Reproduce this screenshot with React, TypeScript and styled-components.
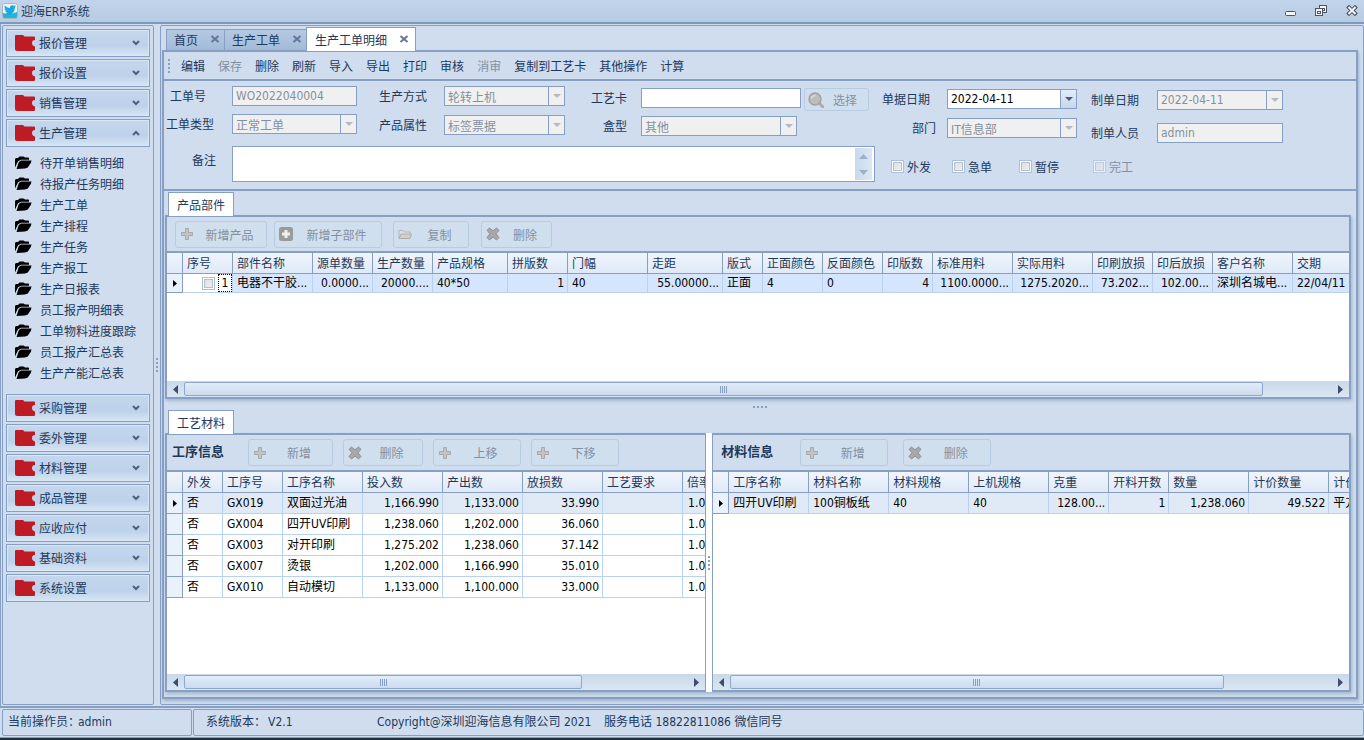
import React from "react";
import styled, { createGlobalStyle, css } from "styled-components";
import { FaTwitter } from "react-icons/fa";

const line = "#869fc3";
const lightLine = "#b9d1f3";
const surface = "#cfddee";
const ink = "#1e395b";
const muted = "#84909f";

const GlobalStyle = createGlobalStyle`
  *, *::before, *::after { box-sizing: border-box; }
  body {
    margin: 0;
    background: ${surface};
    color: ${ink};
    font: 12px/18px "DejaVu Sans Condensed", "Noto Sans CJK SC", sans-serif;
  }
  button, input, select, textarea { font: inherit; color: inherit; margin: 0; border-radius: 0; }
  button { padding: 0; border: 0; background: none; }
  svg { display: block; flex: none; }
`;

/* ---------- window frame ---------- */

const Window = styled.div`
  min-height: 100vh;
  display: flex;
  flex-direction: column;
  background: ${surface};
  border-bottom: 2px solid #1f323f;
`;

const TitleBar = styled.header`
  height: 24px;
  display: flex;
  align-items: center;
  gap: 3px;
  padding: 0 5px 0 2px;
  background: linear-gradient(#c2d4ec, #b8cbe3);
  border-bottom: 2px solid #7c9abc;
`;

const AppTitle = styled.h1`
  margin: 0;
  padding-top: 2px;
  flex: 1;
  font-size: 12px;
  font-weight: normal;
`;

const WindowButtons = styled.div`
  display: flex;
  gap: 18px;
`;

const Workspace = styled.div`
  flex: 1;
  display: flex;
  padding: 1px 0 1px 1px;
  border-left: 1px solid ${line};
`;

const Sidebar = styled.nav`
  flex: none;
  width: 152px;
  display: flex;
  flex-direction: column;
  gap: 2px;
  padding: 3px;
  border: 1px solid ${line};
  border-radius: 2px;
`;

const NavButton = styled.button`
  height: 28px;
  flex: none;
  display: flex;
  align-items: center;
  gap: 4px;
  padding: 0 8px;
  border: 1px solid ${line};
  background: linear-gradient(#c4d7ec, #bdd1ea 60%, #d6e6f4);
  box-shadow: inset 0 0 0 1px #d9e7f5;
  text-align: left;

  span { flex: 1; padding-top: 2px; }
`;

const NavList = styled.ul`
  list-style: none;
  margin: 0;
  padding: 3px 9px 9px;
`;

const NavLink = styled.a`
  height: 21px;
  display: flex;
  align-items: center;
  gap: 8px;
  color: ${ink};
  text-decoration: none;
  white-space: nowrap;

  span { padding-top: 2px; }
`;

const Grip = styled.div<{ $vertical?: boolean; $white?: boolean }>`
  flex: none;
  display: flex;
  align-items: center;
  justify-content: center;
  gap: 2px;
  ${p => (p.$vertical ? "width: 6px; flex-direction: column;" : "height: 11px; padding-top: 5px;")}
  background: ${p => (p.$white ? "#fff" : "transparent")};

  i { width: 2px; height: 2px; background: ${line}; }
`;

const Main = styled.main`
  flex: 1;
  min-width: 0;
  display: flex;
  flex-direction: column;
  padding: 1px 5px 5px 1px;
  border: 1px solid ${line};
  border-radius: 2px;
`;

/* ---------- tabs ---------- */

const PageTabs = styled.div`
  height: 23px;
  flex: none;
  display: flex;
  align-items: flex-end;
  padding-left: 4px;
`;

const PageTab = styled.div<{ $active?: boolean }>`
  height: 21px;
  display: flex;
  align-items: center;
  gap: 12px;
  padding: 0 4px 0 7px;
  border: 1px solid ${line};
  border-right-width: 0;
  border-bottom: 0;
  background: linear-gradient(#b4c9e2, #a3bbd9);

  span { padding-top: 2px; }
  ${p => p.$active && css`
    position: relative;
    height: 24px;
    margin-bottom: -1px;
    padding: 0 6px 0 8px;
    border-right-width: 1px;
    background: #fff;
  `}
`;

const Page = styled.section`
  flex: 1;
  display: flex;
  flex-direction: column;
  border: 2px solid ${line};
  box-shadow: 1px 2px 3px rgba(90, 115, 150, 0.4);
`;

const SectionTabs = styled.div`
  flex: none;
  height: 23px;
  display: flex;
  padding-left: 3px;
`;

const SectionTab = styled.button`
  position: relative;
  height: 24px;
  padding: 2px 8px 0;
  border: 1px solid ${line};
  border-bottom: 0;
  background: #fff;
`;

/* ---------- toolbar ---------- */

const Toolbar = styled.div`
  flex: none;
  height: 29px;
  display: flex;
  align-items: center;
  gap: 9px;
  padding-left: 2px;
  border-bottom: 2px solid ${line};
`;

const ToolButtons = styled.div`
  display: flex;
  gap: 13px;
  padding-top: 2px;
`;

const ToolButton = styled.button`
  white-space: nowrap;
  &:disabled { color: ${muted}; }
`;

/* ---------- form ---------- */

const Form = styled.form`
  flex: none;
  display: flex;
  gap: 7px;
  padding: 5px 2px 7px;
  border-bottom: 2px solid ${line};
`;

const FormBlock = styled.div`
  flex: none;
  display: flex;
  flex-direction: column;
`;

const FieldRow = styled.div<{ $end?: number }>`
  display: flex;
  align-items: flex-start;
  padding-right: ${p => p.$end ?? 0}px;
`;

const FieldStack = styled.div<{ $label: number; $control: number; $gap?: number; $top?: number; $before?: number }>`
  display: grid;
  grid-template-columns: ${p => p.$label}px ${p => p.$control}px;
  row-gap: ${p => p.$gap ?? 8}px;
  align-items: center;
  padding-top: ${p => p.$top ?? 0}px;
  margin-left: ${p => p.$before ?? 0}px;
`;

const Label = styled.label<{ $end?: number; $inset?: number }>`
  white-space: nowrap;
  padding-top: 2px;
  padding-left: ${p => p.$inset ?? 0}px;
  ${p => p.$end !== undefined && `text-align: right; padding-right: ${p.$end}px;`}
`;

const TextInput = styled.input`
  width: 100%;
  height: 20px;
  padding: 0 3px;
  border: 1px solid ${line};
  background: #fff;
  &:disabled { background: #f0f0f0; color: ${muted}; }
`;

const PickerBox = styled.div<{ $short?: boolean; $live?: boolean }>`
  width: ${p => (p.$short ? "calc(100% - 4px)" : "100%")};
  height: 20px;
  display: flex;
  border: 1px solid ${line};
  background: ${p => (p.$live ? "#fff" : "#f0f0f0")};
  color: ${p => (p.$live ? "#000" : muted)};

  select, input {
    flex: 1;
    min-width: 0;
    appearance: none;
    border: 0;
    padding: 0 3px;
    background: none;
    color: inherit;
    opacity: 1;
  }
  select { padding-top: 2px; }
`;

const PickerArrow = styled.button<{ $live?: boolean }>`
  width: 16px;
  display: flex;
  align-items: center;
  justify-content: center;
  border-left: 1px solid ${line};
  background: ${p => (p.$live ? "linear-gradient(#e3edf8, #c6d8ed)" : "none")};
`;

const RemarkRow = styled.div`
  display: grid;
  grid-template-columns: 66px 1fr;
  align-items: center;
  margin-top: 10px;

  label { padding-bottom: 8px; }
`;

const RemarkBox = styled.div`
  height: 36px;
  display: flex;
  padding: 1px 2px 1px 0;
  border: 1px solid ${line};
  background: #fff;

  textarea { flex: 1; border: 0; padding: 2px 3px; resize: none; background: none; overflow: hidden; }
`;

const RemarkScroll = styled.div`
  width: 17px;
  display: flex;
  flex-direction: column;
  align-items: center;
  justify-content: space-around;
  background: linear-gradient(90deg, #c9d9eb, #dbe7f4);
`;

const CheckRow = styled.div`
  display: grid;
  grid-template-columns: 61px 67px 74px auto;
  padding: 13px 0 0 9px;
`;

const CheckLabel = styled.label<{ $off?: boolean }>`
  display: flex;
  align-items: center;
  gap: 3px;
  color: ${p => (p.$off ? muted : ink)};

  span { padding-top: 3px; }
`;

const CheckBox = styled.input.attrs({ type: "checkbox" })`
  appearance: none;
  flex: none;
  width: 13px;
  height: 13px;
  border: 1px solid #a6c0e2;
  background: linear-gradient(135deg, #dcdcdc, #f2f2f2);
  box-shadow: inset 0 0 0 1px #fff, inset 0 0 0 2px #b9bfc8;
  &:disabled { opacity: 0.6; }
`;

const PanelButton = styled.button<{ $w: number; $before?: number }>`
  width: ${p => p.$w}px;
  height: 27px;
  flex: none;
  display: flex;
  align-items: center;
  margin-left: ${p => p.$before ?? 0}px;
  padding: 0 2px 0 3px;
  border: 1px solid #b7cce0;
  border-radius: 3px;
  background: #cfdfee;
  color: ${muted};

  span { flex: 1; padding-top: 3px; text-align: center; white-space: nowrap; }
`;

const ChooseButton = styled(PanelButton)`
  height: 23px;
  margin-top: 2px;
`;

/* ---------- panels and grids ---------- */

const TopSection = styled.section`
  flex: none;
  height: 208px;
  display: flex;
  flex-direction: column;
  padding: 1px 5px 0 1px;
`;

const BottomSection = styled.section`
  flex: 1;
  display: flex;
  flex-direction: column;
  padding: 0 5px 5px 1px;
`;

const Panel = styled.div`
  flex: 1;
  min-height: 0;
  display: flex;
  flex-direction: column;
  border: 2px solid ${line};
  box-shadow: 1px 2px 3px rgba(90, 115, 150, 0.35);
`;

const SplitPanel = styled.div`
  flex: 1;
  display: flex;
  box-shadow: 1px 2px 3px rgba(90, 115, 150, 0.35);
`;

const Pane = styled.div<{ $share: number; $side: "left" | "right" }>`
  flex: ${p => p.$share} 1 0;
  min-width: 0;
  display: flex;
  flex-direction: column;
  border: 2px solid ${line};
  ${p => (p.$side === "left" ? "border-right-width: 1px;" : "border-left-width: 1px;")}
`;

const PanelBar = styled.div<{ $h: number; $start: number }>`
  flex: none;
  height: ${p => p.$h}px;
  display: flex;
  align-items: center;
  padding-left: ${p => p.$start}px;
  border-bottom: 2px solid ${line};
  overflow: hidden;
`;

const PaneTitle = styled.h2`
  flex: none;
  width: 52px;
  margin: 0;
  padding-bottom: 2px;
  font-size: 13px;
  line-height: 18px;
  font-weight: bold;
`;

const GridBody = styled.div`
  flex: 1;
  min-height: 100px;
  overflow: hidden;
  background: #fff;
`;

const Table = styled.table`
  table-layout: fixed;
  width: 0;
  border-collapse: separate;
  border-spacing: 0;
  color: #000;
`;

const HeadCell = styled.th`
  height: 21px;
  padding: 2px 3px 0 4px;
  border-right: 1px solid ${line};
  border-bottom: 1px solid ${line};
  background: linear-gradient(#f0f5fc, #dfe9f7);
  color: ${ink};
  font-weight: normal;
  text-align: left;
  white-space: nowrap;
  overflow: hidden;
`;

const Cell = styled.td<{ $right?: boolean; $tone?: string; $h: number }>`
  height: ${p => p.$h}px;
  padding: 0 3px 0 4px;
  line-height: 18px;
  border-right: 1px solid ${lightLine};
  border-bottom: 1px solid ${lightLine};
  background: ${p => p.$tone ?? "#fff"};
  text-align: ${p => (p.$right ? "right" : "left")};
  white-space: nowrap;
  overflow: hidden;
`;

const Indicator = styled(Cell)`
  border-color: ${line};
  background: #e9f1fb;

  svg { margin-left: 2px; }
`;

const SequenceBox = styled.div`
  display: flex;
  align-items: center;
  justify-content: flex-end;
  gap: 3px;
  margin-right: -3px;

  span { width: 14px; height: 18px; border: 1px dotted #000; text-align: center; line-height: 17px; }
`;

const ScrollBar = styled.div`
  flex: none;
  height: 16px;
  display: flex;
  background: linear-gradient(#c9d9e9, #dae6f2);
`;

const ScrollArrow = styled.button`
  width: 17px;
  display: flex;
  align-items: center;
  justify-content: center;
`;

const Track = styled.div`
  flex: 1;
  display: flex;
`;

const Thumb = styled.div<{ $size: number }>`
  width: ${p => p.$size}%;
  margin: 1px 0;
  display: flex;
  align-items: center;
  justify-content: center;
  gap: 1px;
  border: 1px solid #8ea8cd;
  border-radius: 2px;
  background: linear-gradient(#e2ecf8, #cbdaee);

  i { width: 1px; height: 7px; background: ${line}; }
`;

/* ---------- status bar ---------- */

const StatusBar = styled.footer`
  flex: none;
  height: 32px;
  display: flex;
  gap: 1px;
  padding: 1px 0 1px 2px;
  border-top: 2px solid ${line};
  border-bottom: 1px solid ${line};
`;

const StatusCell = styled.div<{ $w?: number }>`
  ${p => (p.$w ? `flex: none; width: ${p.$w}px; padding-left: 5px;` : "flex: 1; padding-left: 12px;")}
  display: flex;
  padding-top: 3px;
  border: 1px solid ${line};
  border-radius: 2px;
  white-space: pre;
`;

const StatusItem = styled.span<{ $w?: number }>`
  ${p => p.$w && `width: ${p.$w}px;`}
`;

/* ---------- drawings ---------- */

const AppIcon = () => (
  <svg width="16" height="16" viewBox="0 0 16 16">
    <rect x="0.5" y="0.5" width="15" height="15" rx="2" fill="#eef1f3" stroke="#a9b6c4" />
    <path d="M1 10c4 1.5 9 1 14-1v5a1 1 0 0 1-1 1H2a1 1 0 0 1-1-1z" fill="#1fb6dc" />
    <FaTwitter x="2" y="1" width="10" height="10" color="#18a9dd" />
  </svg>
);

const RedFolder = () => (
  <svg width="20" height="16" viewBox="0 0 20 16" fill="#bf1b25">
    <path d="M1 0h7l1.500 1.500H19a1 1 0 0 1 1 1V5c-2 0-3 1-3 3s1 3 3 3.500V15a1 1 0 0 1-1 1H2c-1 0-2-1-2-2V1a1 1 0 0 1 1-1z" />
  </svg>
);

const BlackFolder = () => (
  <svg width="17" height="14" viewBox="0 0 17 14" fill="#000">
    <path d="M0 11.500V3l1-1h2L4.500.5h4L10 1.500h3.500l.5.700v1.600H6L3 5.200z" />
    <path d="M1.500 13 3.800 6 6.200 4.600H16.500L15.800 7 12.800 11.500 10 12.600z" />
  </svg>
);

const Chevron = ({ up }: { up?: boolean }) => (
  <svg width="10" height="8" viewBox="0 0 10 8" fill="none" stroke="#4d5f7d" strokeWidth="2">
    {up ? <path d="M2 6l3-3 3 3" /> : <path d="M2 2l3 3 3-3" />}
  </svg>
);

const CloseX = () => (
  <svg width="10" height="10" viewBox="0 0 10 10" fill="none" stroke="#68749a" strokeWidth="2">
    <path d="M1.500 1l7 6M8.500 1l-7 6" />
  </svg>
);

const Down = ({ live }: { live?: boolean }) => (
  <svg width="8" height="4" viewBox="0 0 8 4" fill={live ? "#4a5a80" : "#b3b9c8"}>
    <path d="M0 0h8L4 4z" />
  </svg>
);

const SideArrow = ({ left }: { left?: boolean }) => (
  <svg width="5" height="9" viewBox="0 0 5 9" fill="#3f4c6e">
    <path d={left ? "M5 0v9L0 4.500z" : "M0 0v9L5 4.500z"} />
  </svg>
);

const RowMark = () => (
  <svg width="5" height="7" viewBox="0 0 5 7"><path d="M0 0v7L4 3.500z" /></svg>
);

const PlusIcon = () => (
  <svg width="16" height="14" viewBox="0 0 16 14">
    <path d="M6.500 1.500h3v4h4v3h-4v4h-3v-4h-4v-3h4z" fill="#c4c4c4" stroke="#a9a9a9" strokeWidth="1" strokeLinejoin="round" />
  </svg>
);

const BoxPlusIcon = () => (
  <svg width="16" height="14" viewBox="0 0 16 14">
    <rect x="1" y="0" width="14" height="14" rx="2.500" fill="#9b9b9b" />
    <path d="M6.500 3h3v2.500H12v3H9.500V11h-3V8.500H4v-3h2.500z" fill="#efefef" />
  </svg>
);

const CrossIcon = () => (
  <svg width="16" height="14" viewBox="0 0 16 14">
    <path d="M4.500 1 8 3.800 11.500 1 14 3.300 11 6.800l3 3.700L11.500 13 8 10 4.500 13 2 10.500 5 6.800 2 3.300z" fill="#a8a8a8" stroke="#919191" strokeWidth="1" strokeLinejoin="round" />
  </svg>
);

const FolderIcon = () => (
  <svg width="16" height="14" viewBox="0 0 16 14" strokeLinejoin="round">
    <path d="M2 11V3.500h4l1.500 1.500H13v2" fill="#dedede" stroke="#b5b5b5" />
    <path d="M2 11.500 4 7h10.500L13 11.500z" fill="#cfcfcf" stroke="#adadad" />
  </svg>
);

const SearchIcon = () => (
  <svg width="16" height="16" viewBox="0 0 16 16">
    <path d="M11 11l4 4" stroke="#b0a9a2" strokeWidth="3" strokeLinecap="round" />
    <circle cx="7" cy="7" r="6" fill="#bcbcbc" stroke="#a2a2a2" strokeWidth="1.500" />
    <path d="M3.500 6.500a4 4 0 0 1 4-3" stroke="#dadada" strokeWidth="1.500" fill="none" />
  </svg>
);

/* ---------- composed parts ---------- */

const Dots = () => <><i /><i /><i /><i /></>;

const Picker = ({ id, value, short }: { id: string; value: string; short?: boolean }) => (
  <PickerBox $short={short}>
    <select id={id} disabled defaultValue={value}><option>{value}</option></select>
    <PickerArrow type="button" disabled aria-label="展开"><Down /></PickerArrow>
  </PickerBox>
);

const DateBox = ({ id, value, live }: { id: string; value: string; live?: boolean }) => (
  <PickerBox $live={live}>
    <input id={id} disabled={!live} defaultValue={value} />
    <PickerArrow type="button" $live={live} disabled={!live} aria-label="选择日期"><Down live={live} /></PickerArrow>
  </PickerBox>
);

const HScroll = ({ size }: { size: number }) => (
  <ScrollBar>
    <ScrollArrow aria-label="向左滚动"><SideArrow left /></ScrollArrow>
    <Track><Thumb $size={size}><Dots /></Thumb></Track>
    <ScrollArrow aria-label="向右滚动"><SideArrow /></ScrollArrow>
  </ScrollBar>
);

type Column = { title: string; width: number; right?: boolean };

const DataGrid = ({ columns, rows, tone, rowHeight, sequence }: {
  columns: Column[]; rows: string[][]; tone: string; rowHeight: number; sequence?: boolean;
}) => (
  <GridBody>
    <Table>
      <colgroup>
        <col width={16} />
        {columns.map(c => <col key={c.title} width={c.width} />)}
      </colgroup>
      <thead>
        <tr>
          <HeadCell />
          {columns.map(c => <HeadCell key={c.title}>{c.title}</HeadCell>)}
        </tr>
      </thead>
      <tbody>
        {rows.map((row, r) => (
          <tr key={r}>
            <Indicator $h={rowHeight}>{r === 0 && <RowMark />}</Indicator>
            {row.map((value, i) => (
              sequence && i === 0
                ? <Cell key={i} $h={rowHeight}><SequenceBox><CheckBox aria-label="选择行" /><span>{value}</span></SequenceBox></Cell>
                : <Cell key={i} $h={rowHeight} $right={columns[i].right} $tone={r === 0 ? tone : undefined}>{value}</Cell>
            ))}
          </tr>
        ))}
      </tbody>
    </Table>
  </GridBody>
);

/* ---------- data ---------- */

const topNav = ["报价管理", "报价设置", "销售管理", "生产管理"];
const bottomNav = ["采购管理", "委外管理", "材料管理", "成品管理", "应收应付", "基础资料", "系统设置"];
const navItems = [
  "待开单销售明细", "待报产任务明细", "生产工单", "生产排程", "生产任务", "生产报工",
  "生产日报表", "员工报产明细表", "工单物料进度跟踪", "员工报产汇总表", "生产产能汇总表",
];
const tools = ["编辑", "保存", "删除", "刷新", "导入", "导出", "打印", "审核", "消审", "复制到工艺卡", "其他操作", "计算"];

const partColumns: Column[] = [
  { title: "序号", width: 50 }, { title: "部件名称", width: 80 }, { title: "源单数量", width: 60, right: true },
  { title: "生产数量", width: 60, right: true }, { title: "产品规格", width: 75 }, { title: "拼版数", width: 60, right: true },
  { title: "门幅", width: 80 }, { title: "走距", width: 75, right: true }, { title: "版式", width: 40 },
  { title: "正面颜色", width: 60 }, { title: "反面颜色", width: 60 }, { title: "印版数", width: 50, right: true },
  { title: "标准用料", width: 80, right: true }, { title: "实际用料", width: 80, right: true },
  { title: "印刷放损", width: 60, right: true }, { title: "印后放损", width: 60, right: true },
  { title: "客户名称", width: 80 }, { title: "交期", width: 75 },
];
const partRows = [[
  "1", "电器不干胶...", "0.0000...", "20000....", "40*50", "1", "40", "55.00000...", "正面", "4", "0", "4",
  "1100.0000...", "1275.2020...", "73.202...", "102.00...", "深圳名城电...", "22/04/11",
]];

const processColumns: Column[] = [
  { title: "外发", width: 40 }, { title: "工序号", width: 60 }, { title: "工序名称", width: 80 },
  { title: "投入数", width: 80, right: true }, { title: "产出数", width: 80, right: true },
  { title: "放损数", width: 80, right: true }, { title: "工艺要求", width: 80 }, { title: "倍率", width: 40, right: true },
];
const processRows = [
  ["否", "GX019", "双面过光油", "1,166.990", "1,133.000", "33.990", "", "1.000"],
  ["否", "GX004", "四开UV印刷", "1,238.060", "1,202.000", "36.060", "", "1.000"],
  ["否", "GX003", "对开印刷", "1,275.202", "1,238.060", "37.142", "", "1.000"],
  ["否", "GX007", "烫银", "1,202.000", "1,166.990", "35.010", "", "1.000"],
  ["否", "GX010", "自动模切", "1,133.000", "1,100.000", "33.000", "", "1.000"],
];

const materialColumns: Column[] = [
  { title: "工序名称", width: 80 }, { title: "材料名称", width: 80 }, { title: "材料规格", width: 80 },
  { title: "上机规格", width: 80 }, { title: "克重", width: 60, right: true }, { title: "开料开数", width: 60, right: true },
  { title: "数量", width: 80, right: true }, { title: "计价数量", width: 80, right: true }, { title: "计价单位", width: 80 },
];
const materialRows = [["四开UV印刷", "100铜板纸", "40", "40", "128.00...", "1", "1,238.060", "49.522", "平方米"]];

export default function App() {
  return (
    <Window>
      <GlobalStyle />
      <TitleBar>
        <AppIcon />
        <AppTitle>迎海ERP系统</AppTitle>
        <WindowButtons>
          <button aria-label="最小化">
            <svg width="12" height="14" viewBox="0 0 12 14"><rect x="0.500" y="7.500" width="10" height="4" rx="1" fill="#f4f7fa" stroke="#4b5566" /></svg>
          </button>
          <button aria-label="还原">
            <svg width="13" height="14" viewBox="0 0 13 14" fill="#f4f7fa" stroke="#4b5566">
              <rect x="4.500" y="1.500" width="7" height="7" /><rect x="7.500" y="4.500" width="2" height="2" />
              <rect x="0.500" y="4.500" width="7" height="7" /><rect x="2.500" y="7.500" width="3" height="2" />
            </svg>
          </button>
          <button aria-label="关闭">
            <svg width="13" height="14" viewBox="0 0 13 14" fill="none">
              <path d="M3 3.500l6 6M9 3.500l-6 6" stroke="#4b5566" strokeWidth="4" strokeLinecap="square" />
              <path d="M2.500 3l7 7M9.500 3l-7 7" stroke="#f4f7fa" strokeWidth="2" />
            </svg>
          </button>
        </WindowButtons>
      </TitleBar>

      <Workspace>
        <Sidebar>
          {topNav.map((name, i) => (
            <NavButton key={name}><RedFolder /><span>{name}</span><Chevron up={i === 3} /></NavButton>
          ))}
          <NavList>
            {navItems.map(name => (
              <li key={name}><NavLink href="#"><BlackFolder /><span>{name}</span></NavLink></li>
            ))}
          </NavList>
          {bottomNav.map(name => (
            <NavButton key={name}><RedFolder /><span>{name}</span><Chevron /></NavButton>
          ))}
        </Sidebar>
        <Grip $vertical><Dots /></Grip>

        <Main>
          <PageTabs>
            <PageTab><span>首页</span><button aria-label="关闭首页"><CloseX /></button></PageTab>
            <PageTab><span>生产工单</span><button aria-label="关闭生产工单"><CloseX /></button></PageTab>
            <PageTab $active><span>生产工单明细</span><button aria-label="关闭生产工单明细"><CloseX /></button></PageTab>
          </PageTabs>

          <Page>
            <Toolbar>
              <Grip $vertical><Dots /></Grip>
              <ToolButtons>
                {tools.map(name => (
                  <ToolButton key={name} disabled={name === "保存" || name === "消审"}>{name}</ToolButton>
                ))}
              </ToolButtons>
            </Toolbar>

            <Form>
              <FormBlock>
                <FieldRow $end={6}>
                  <FieldStack $label={66} $control={125}>
                    <Label htmlFor="orderNo" $inset={4}>工单号</Label>
                    <TextInput id="orderNo" disabled defaultValue="WO2022040004" />
                    <Label htmlFor="orderType">工单类型</Label>
                    <Picker id="orderType" value="正常工单" />
                  </FieldStack>
                  <FieldStack $label={65} $control={121} $before={22} $gap={9}>
                    <Label htmlFor="method">生产方式</Label>
                    <Picker id="method" value="轮转上机" />
                    <Label htmlFor="attribute">产品属性</Label>
                    <Picker id="attribute" value="标签票据" />
                  </FieldStack>
                  <FieldStack $label={50} $control={160} $top={2} $before={26}>
                    <Label htmlFor="card" $end={14}>工艺卡</Label>
                    <TextInput id="card" />
                    <Label htmlFor="boxType" $end={14}>盒型</Label>
                    <Picker id="boxType" value="其他" short />
                  </FieldStack>
                  <ChooseButton type="button" disabled $w={65} $before={3}><SearchIcon /><span>选择</span></ChooseButton>
                </FieldRow>
                <RemarkRow>
                  <Label htmlFor="remark" $end={16}>备注</Label>
                  <RemarkBox>
                    <textarea id="remark" />
                    <RemarkScroll>
                      <svg width="9" height="5" viewBox="0 0 9 5" fill="#9fb0cb"><path d="M0 5h9L4.500 0z" /></svg>
                      <svg width="9" height="5" viewBox="0 0 9 5" fill="#9fb0cb"><path d="M0 0h9L4.500 5z" /></svg>
                    </RemarkScroll>
                  </RemarkBox>
                </RemarkRow>
              </FormBlock>

              <FormBlock>
                <FieldRow>
                  <FieldStack $label={65} $control={130} $top={3} $gap={9}>
                    <Label htmlFor="docDate">单据日期</Label>
                    <DateBox id="docDate" value="2022-04-11" live />
                    <Label htmlFor="department" $end={11}>部门</Label>
                    <Picker id="department" value="IT信息部" />
                  </FieldStack>
                  <FieldStack $label={66} $control={126} $top={4} $gap={13} $before={14}>
                    <Label htmlFor="createDate">制单日期</Label>
                    <DateBox id="createDate" value="2022-04-11" />
                    <Label htmlFor="creator">制单人员</Label>
                    <TextInput id="creator" disabled defaultValue="admin" />
                  </FieldStack>
                </FieldRow>
                <CheckRow>
                  <CheckLabel><CheckBox /><span>外发</span></CheckLabel>
                  <CheckLabel><CheckBox /><span>急单</span></CheckLabel>
                  <CheckLabel><CheckBox /><span>暂停</span></CheckLabel>
                  <CheckLabel $off><CheckBox disabled /><span>完工</span></CheckLabel>
                </CheckRow>
              </FormBlock>
            </Form>

            <TopSection>
              <SectionTabs><SectionTab>产品部件</SectionTab></SectionTabs>
              <Panel>
                <PanelBar $h={36} $start={8}>
                  <PanelButton disabled $w={92}><PlusIcon /><span>新增产品</span></PanelButton>
                  <PanelButton disabled $w={108} $before={7}><BoxPlusIcon /><span>新增子部件</span></PanelButton>
                  <PanelButton disabled $w={76} $before={11}><FolderIcon /><span>复制</span></PanelButton>
                  <PanelButton disabled $w={71} $before={12}><CrossIcon /><span>删除</span></PanelButton>
                </PanelBar>
                <DataGrid columns={partColumns} rows={partRows} tone="#d5e5fd" rowHeight={19} sequence />
                <HScroll size={94} />
              </Panel>
            </TopSection>

            <Grip><Dots /></Grip>

            <BottomSection>
              <SectionTabs><SectionTab>工艺材料</SectionTab></SectionTabs>
              <SplitPanel>
                <Pane $share={541} $side="left">
                  <PanelBar $h={37} $start={5}>
                    <PaneTitle>工序信息</PaneTitle>
                    <PanelButton disabled $w={85} $before={24}><PlusIcon /><span>新增</span></PanelButton>
                    <PanelButton disabled $w={80} $before={10}><CrossIcon /><span>删除</span></PanelButton>
                    <PanelButton disabled $w={88} $before={10}><PlusIcon /><span>上移</span></PanelButton>
                    <PanelButton disabled $w={88} $before={10}><PlusIcon /><span>下移</span></PanelButton>
                  </PanelBar>
                  <DataGrid columns={processColumns} rows={processRows} tone="#e0eaf6" rowHeight={21} />
                  <HScroll size={79} />
                </Pane>
                <Grip $vertical $white><Dots /></Grip>
                <Pane $share={639} $side="right">
                  <PanelBar $h={37} $start={8}>
                    <PaneTitle>材料信息</PaneTitle>
                    <PanelButton disabled $w={88} $before={27}><PlusIcon /><span>新增</span></PanelButton>
                    <PanelButton disabled $w={88} $before={15}><CrossIcon /><span>删除</span></PanelButton>
                  </PanelBar>
                  <DataGrid columns={materialColumns} rows={materialRows} tone="#e0eaf6" rowHeight={21} />
                  <HScroll size={82} />
                </Pane>
              </SplitPanel>
            </BottomSection>
          </Page>
        </Main>
      </Workspace>

      <StatusBar>
        <StatusCell $w={190}>
          <StatusItem $w={70}>当前操作员：</StatusItem><StatusItem>admin</StatusItem>
        </StatusCell>
        <StatusCell>
          <StatusItem $w={62}>系统版本：</StatusItem><StatusItem $w={109}>V2.1</StatusItem>
          <StatusItem $w={227}>Copyright@深圳迎海信息有限公司 2021</StatusItem>
          <StatusItem>服务电话 18822811086 微信同号</StatusItem>
        </StatusCell>
      </StatusBar>
    </Window>
  );
}
